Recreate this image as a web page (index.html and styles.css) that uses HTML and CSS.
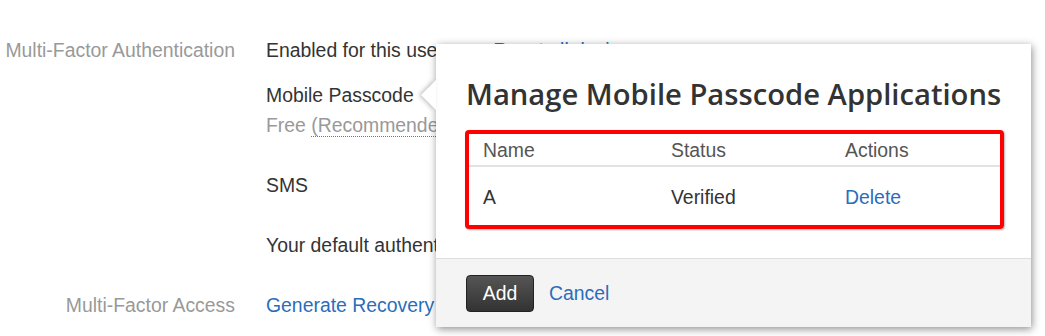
FILE: index.html
```html
<!DOCTYPE html>
<html>
<head>
<meta charset="utf-8">
<link rel="stylesheet" href="styles.css">
</head>
<body>
<div class="page">
  <div class="row">
    <div class="label">Multi-Factor Authentication</div>
    <div class="value">
      <div class="line">Enabled for this user <a class="link gap" href="#">Reset all devices</a></div>
      <div class="method">
        <div class="line">Mobile Passcode</div>
        <div class="line sub">Free <abbr class="abbr">(Recommended)</abbr></div>
      </div>
      <div class="method sms">
        <div class="line">SMS</div>
      </div>
      <div class="line default">Your default authentication method is Mobile Passcode.</div>
    </div>
  </div>
  <div class="row access">
    <div class="label">Multi-Factor Access</div>
    <div class="value"><a class="link" href="#">Generate Recovery Codes</a></div>
  </div>
</div>

<div class="popover">
  <div class="arrow"></div>
  <div class="pop-body">
    <h2 class="pop-title">Manage Mobile Passcode Applications</h2>
    <div class="highlight">
      <table class="apps">
        <thead>
          <tr><th class="c1">Name</th><th class="c2">Status</th><th>Actions</th></tr>
        </thead>
        <tbody>
          <tr><td>A</td><td>Verified</td><td><a class="link" href="#">Delete</a></td></tr>
        </tbody>
      </table>
    </div>
  </div>
  <div class="pop-footer">
    <button class="btn">Add</button>
    <a class="link" href="#">Cancel</a>
  </div>
</div>
</body>
</html>
```

FILE: styles.css
```css
html, body {
  margin: 0;
  padding: 0;
  background: #fff;
}
body {
  font-family: "Liberation Sans", Arial, sans-serif;
  font-size: 19.4px;
  color: #333;
  width: 1045px;
  height: 336px;
  overflow: hidden;
  position: relative;
}
.page {
  padding-top: 39px;
}
.row {
  display: grid;
  grid-template-columns: 235px 1fr;
  column-gap: 31px;
}
.label {
  text-align: right;
  color: #999;
  line-height: 22px;
  white-space: nowrap;
}
.line {
  line-height: 22px;
  white-space: nowrap;
}
.value {
  white-space: nowrap;
}
.method {
  margin-top: 23px;
}
.sub {
  margin-top: 8px;
  color: #999;
}
.abbr {
  text-decoration: none;
  border-bottom: 1px dotted #777;
}
.sms {
  margin-top: 38px;
}
.default {
  margin-top: 38px;
}
.access {
  margin-top: 38px;
}
.link {
  color: #2a6ebb;
  text-decoration: none;
}
.gap {
  margin-left: 44px;
}

.popover {
  position: absolute;
  left: 436px;
  top: 44px;
  width: 595px;
  height: 283px;
  background: #fff;
  box-shadow: 1px 2px 8px rgba(0, 0, 0, 0.45);
  display: flex;
  flex-direction: column;
}
.arrow {
  position: absolute;
  left: -15px;
  top: 36px;
  width: 0;
  height: 0;
  border-top: 15px solid transparent;
  border-bottom: 15px solid transparent;
  border-right: 15px solid #fff;
  filter: drop-shadow(-2px 0 2px rgba(0, 0, 0, 0.25));
}
.pop-body {
  flex: 1;
  padding: 0 27px 0 29px;
}
.pop-title {
  margin: 31px 0 0 1px;
  font-family: "Open Sans", "Noto Sans", sans-serif;
  font-weight: 600;
  font-size: 29.2px;
  line-height: 38px;
  color: #333;
  white-space: nowrap;
}
.highlight {
  margin-top: 17px;
  border: 4px solid #ff0000;
  border-radius: 4px;
  box-shadow: 1px 1px 2px rgba(0, 0, 0, 0.3);
}
.apps {
  width: 100%;
  border-collapse: collapse;
  font-size: 19.4px;
}
.apps th {
  text-align: left;
  font-weight: normal;
  color: #555;
  padding: 6px 14px 4px 14px;
  line-height: 21px;
  border-bottom: 2px solid #e2e2e2;
}
.apps td {
  padding: 19px 14px 17px 14px;
  line-height: 22px;
  color: #333;
}
.apps .c1 {
  width: 160px;
}
.apps .c2 {
  width: 146px;
}
.pop-footer {
  height: 68px;
  background: #f4f4f4;
  border-top: 1px solid #ddd;
  display: flex;
  align-items: center;
  gap: 15px;
  padding-left: 30px;
}
.btn {
  font-family: "Liberation Sans", Arial, sans-serif;
  font-size: 19.4px;
  color: #fff;
  background: linear-gradient(#555, #333);
  border: 1px solid #222;
  border-radius: 4px;
  width: 68px;
  height: 37px;
  padding: 0;
}
```
